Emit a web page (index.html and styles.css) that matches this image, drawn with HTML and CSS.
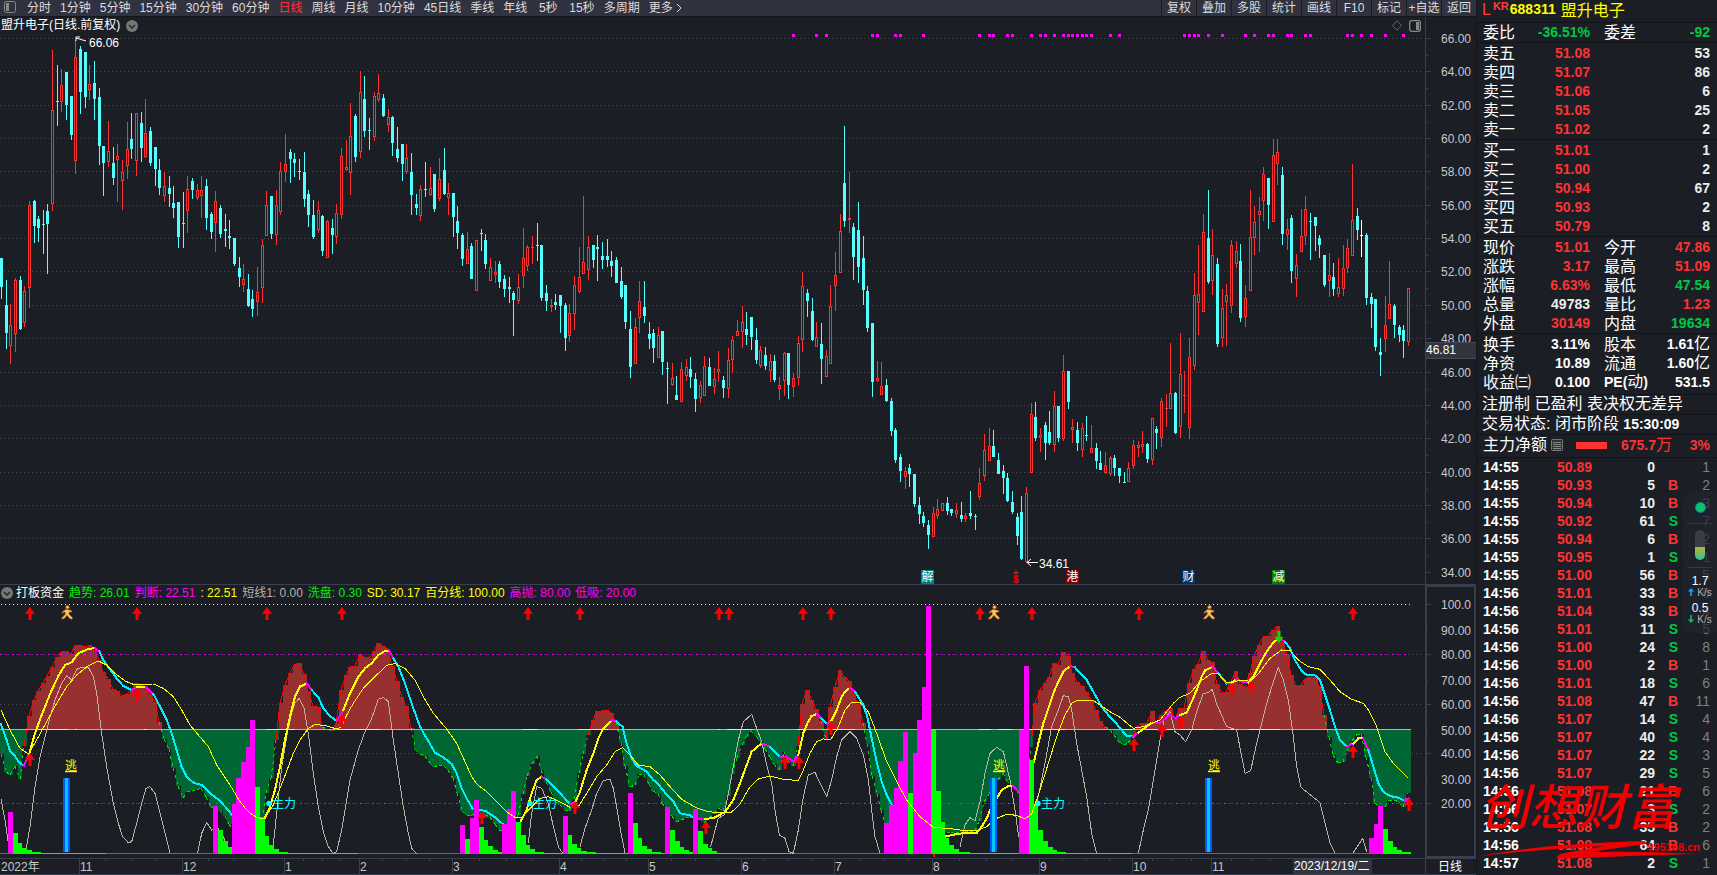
FILE: index.html
```html
<!DOCTYPE html>
<html lang="zh-CN">
<head>
    <meta charset="UTF-8">
    <meta name="viewport" content="width=device-width, initial-scale=1.0">
    <title>盟升电子 688311 日线</title>
    <link rel="stylesheet" href="styles.css">
</head>
<body>
    <main class="charts">
        <nav class="toolbar">
            <div class="periods">
                <svg class="panel-icon" width="12" height="12" viewBox="0 0 12 12"><rect x="0.5" y="0.5" width="11" height="11" rx="2" fill="none" stroke="#888"/><rect x="2" y="2" width="3" height="8" fill="#888"/></svg>
                <button>分时</button>
                <button>1分钟</button>
                <button>5分钟</button>
                <button>15分钟</button>
                <button>30分钟</button>
                <button>60分钟</button>
                <button class="active">日线</button>
                <button>周线</button>
                <button>月线</button>
                <button>10分钟</button>
                <button>45日线</button>
                <button>季线</button>
                <button>年线</button>
                <button>5秒</button>
                <button>15秒</button>
                <button>多周期</button>
                <button class="more">更多<svg width="6" height="10" viewBox="0 0 6 10"><path d="M1 1l4 4-4 4" fill="none" stroke="#ddd"/></svg></button>
            </div>
            <div class="tools">
                <button>复权</button>
                <button>叠加</button>
                <button>多股</button>
                <button>统计</button>
                <button>画线</button>
                <button>F10</button>
                <button>标记</button>
                <button>+自选</button>
                <button>返回</button>
            </div>
        </nav>

        <!-- K线 -->
        <header class="chart-title">
            <h1>盟升电子(日线.前复权)</h1>
            <svg width="12" height="12" viewBox="0 0 12 12"><circle cx="6" cy="6" r="6" fill="#777"/><path d="M3 5l3 3 3-3" fill="none" stroke="#222" stroke-width="1.4"/></svg>
            <div class="title-icons">
                <svg width="10" height="11" viewBox="0 0 10 11"><path d="M5 .7L9.4 5.5 5 10.3.6 5.5z" fill="none" stroke="#666"/></svg>
                <svg width="12" height="12" viewBox="0 0 12 12"><rect x="0.7" y="0.7" width="10.6" height="10.6" rx="2" fill="none" stroke="#888" stroke-width="1.3"/><rect x="7" y="2" width="3" height="8" fill="#888"/></svg>
            </div>
            <div class="axis-gap"></div>
        </header>
        <svg id="price" class="plot" viewBox="0 34 1476 550"></svg>

        <!-- 副图 -->
        <header class="indicator-title">
            <svg width="12" height="12" viewBox="0 0 12 12"><circle cx="6" cy="6" r="6" fill="#777"/><path d="M3 5l3 3 3-3" fill="none" stroke="#222" stroke-width="1.4"/></svg>
            <h2>打板资金</h2>
            <span class="lime">趋势: 26.01</span>
            <span class="magenta">判断: 22.51</span>
            <span class="yellow">: 22.51</span>
            <span class="sand">短线1: 0.00</span>
            <span class="lime">洗盘: 0.30</span>
            <span class="yellow">SD: 30.17</span>
            <span class="yellow">百分线: 100.00</span>
            <span class="magenta">高抛: 80.00</span>
            <span class="magenta">低吸: 20.00</span>
            <div class="axis-gap boxed"></div>
        </header>
        <svg id="indicator" class="plot" viewBox="0 601 1476 274"></svg>
    </main>

    <aside class="quote">
        <header class="stock"><span class="flag">L</span><sup>KR</sup><b>688311</b><span class="name">盟升电子</span></header>
        <div class="rows single">
            <div class="row"><span>委比</span><b class="down">-36.51%</b><span>委差</span><b class="down">-92</b></div>
        </div>
        <div id="asks" class="rows"></div>
        <div id="bids" class="rows"></div>
        <div id="stats" class="rows"></div>
        <div id="finance" class="rows finance"></div>
        <p class="note">注册制 已盈利 表决权无差异</p>
        <p class="note">交易状态: 闭市阶段 <b>15:30:09</b></p>
        <div class="netflow">
            <span>主力净额</span>
            <svg width="12" height="12" viewBox="0 0 12 12"><rect x="0.5" y="0.5" width="11" height="11" rx="1" fill="#333" stroke="#777"/><path d="M2 3.5h8M2 5.5h8M2 7.5h8M2 9.5h8" stroke="#888"/></svg>
            <i class="flow-bar"></i>
            <span class="amount"><b>675.7</b>万</span>
            <b class="ratio">3%</b>
        </div>
        <table class="ticks"><tbody id="ticks"></tbody></table>

        <div class="net-widget">
            <i class="dot"></i>
            <i class="pill"></i>
            <div class="speed">1.7<small><svg width="6" height="8" viewBox="0 0 6 8"><path d="M3 0L6 3.500H3.800V8H2.200V3.500H0z" fill="#1ea0ff"/></svg>K/s</small></div>
            <div class="speed">0.5<small><svg width="6" height="8" viewBox="0 0 6 8"><path d="M3 8L6 4.500H3.800V0H2.200V4.500H0z" fill="#10c060"/></svg>K/s</small></div>
        </div>
        <div class="watermark">
            <strong>创想财富</strong>
            <svg viewBox="0 0 220 20"><path d="M1 16Q60 4 165 1L166 4 110 12Q165 11 218 14 165 15 78 19 74 16 84 13L125 6Q60 9 1 16z" fill="#f00000"/></svg>
            <em>995168.cn</em>
        </div>
    </aside>
    <script src="chart.js"></script>
</body>
</html>
```
FILE: styles.css
```css
* {
    box-sizing: border-box;
}

body {
    margin: 0;
    display: flex;
    align-items: flex-start;
    min-height: 100vh;
    overflow: hidden;
    background: #1b1e25;
    color: #fff;
    font-family: "Liberation Sans", "Noto Sans CJK SC", sans-serif;
    font-size: 12px;
}

h1, h2, p {
    margin: 0;
    font-size: 12px;
    font-weight: normal;
}

button {
    padding: 0;
    border: 0;
    background: none;
    color: #dcdcdc;
    font: inherit;
    white-space: nowrap;
    cursor: pointer;
}

.charts {
    flex: 1;
    min-width: 0;
}

/* toolbar */
.toolbar {
    display: flex;
    justify-content: space-between;
    height: 17px;
    background: #31323f;
    border-bottom: 1px solid #14161b;
    line-height: 14px;
}

.periods {
    display: flex;
    gap: 9px;
    padding-left: 4px;
}

.periods button {
    min-width: 24px;
}

.periods .active {
    color: #ff3232;
}

.panel-icon {
    margin: 1px 2px 0 0;
}

.more svg {
    margin-left: 3px;
    vertical-align: -1px;
}

.tools {
    display: flex;
}

.tools button {
    width: 35px;
    border-left: 1px solid #191b22;
}

/* chart headers */
.chart-title, .indicator-title {
    display: flex;
    align-items: center;
    height: 17px;
    line-height: 17px;
}

.chart-title {
    padding-left: 1px;
    gap: 6px;
}

.title-icons {
    display: flex;
    gap: 7px;
    margin-left: auto;
}

.axis-gap {
    align-self: stretch;
    width: 51px;
    margin-left: auto;
    border-left: 1px solid #39404d;
}

.title-icons + .axis-gap {
    margin-left: -2px;
}

.boxed {
    border: 2px solid #39404d;
    border-bottom: 0;
}

.indicator-title {
    gap: 5px;
    padding-left: 1px;
    border-top: 1px solid #39404d;
}

.indicator-title h2 {
    margin-left: -2px;
}

.plot {
    display: block;
    width: 100%;
    overflow: visible;
    font-size: 12px;
}

.lime { color: #00f000; }
.magenta { color: #ff00ff; }
.yellow { color: #ffff00; }
.sand { color: #bdb3a5; }

/* quote panel */
.quote {
    position: relative;
    width: 241px;
    border-left: 1px solid #12141a;
    font-size: 16px;
}

.quote b {
    font-size: 14px;
}

.stock {
    display: flex;
    align-items: center;
    height: 23px;
    padding: 0 0 5px 5px;
    border-bottom: 1px solid #12141a;
    color: #ffff00;
}

.stock .flag {
    color: #ff4040;
    line-height: 16px;
    padding-top: 2px;
}

.stock sup {
    color: #ff4040;
    font-size: 11px;
    font-weight: bold;
    line-height: 11px;
    padding: 0 1px 5px 2px;
}

.stock .name {
    margin-left: 5px;
}

.rows {
    padding: 1px 7px 0 6px;
    border-bottom: 1px solid #12141a;
}

.rows.single {
    padding-top: 0;
}

.row {
    display: grid;
    grid-template-columns: 54px 53px 54px 1fr;
    align-items: center;
    height: 19px;
    line-height: 19px;
    white-space: nowrap;
}

.row b {
    text-align: right;
}

.row span:nth-child(3) {
    padding-left: 14px;
}

.finance {
    padding: 0 7px 3px 6px;
}

.up { color: #ff3232; }
.down { color: #00c840; }
.plain { color: #ececec; }

.unit {
    font-weight: normal;
    font-size: 16px;
}

.note {
    height: 20px;
    padding-left: 5px;
    border-bottom: 1px solid #12141a;
    font-size: 16px;
    line-height: 18px;
    white-space: nowrap;
}

.netflow {
    display: flex;
    align-items: center;
    height: 23px;
    padding: 0 7px 2px 6px;
    border-bottom: 1px solid #12141a;
    line-height: 20px;
    white-space: nowrap;
}

.netflow > svg {
    margin-left: 4px;
}

.flow-bar {
    width: 31px;
    height: 7px;
    margin: 0 14px 0 13px;
    background: #ff3232;
}

.amount, .ratio {
    color: #ff3232;
}

.ratio {
    margin-left: auto;
}

.ticks {
    width: 233px;
    border-collapse: collapse;
    font-size: 14px;
    font-weight: bold;
}

.ticks td {
    height: 18px;
    padding: 0;
    line-height: 18px;
    text-align: right;
}

.ticks td:first-child {
    width: 50px;
    padding-left: 6px;
    text-align: left;
}

.ticks td:nth-child(2) { width: 65px; }
.ticks td:nth-child(3) { width: 63px; }
.ticks td:nth-child(4) { width: 23px; }

.ticks td:last-child {
    color: #808080;
    font-weight: normal;
}

/* floating network meter */
.net-widget {
    position: absolute;
    top: 491px;
    right: 0;
    width: 34px;
    height: 142px;
    padding-top: 11px;
    border-radius: 10px 0 0 10px;
    background: rgba(31, 35, 46, 0.7);
    text-align: center;
}

.dot {
    display: block;
    width: 11px;
    height: 11px;
    margin: 0 auto 17px;
    border-radius: 50%;
    background: #0cc267;
    border: 1px solid #1a7ca0;
}

.pill {
    display: block;
    width: 10px;
    height: 30px;
    margin: 0 auto;
    border-radius: 5px;
    background: linear-gradient(#3a3d47 17px, #b5b52c 17px, #30c0a0);
}

.pill::before, .pill::after {
    content: "";
    position: absolute;
    left: 4px;
    right: 4px;
    top: 32px;
    height: 1px;
    background: #343b48;
}

.pill::after {
    top: 76px;
}

.speed {
    margin-top: 15px;
    font-size: 12px;
    line-height: 12px;
}

.speed + .speed {
    margin-top: 4px;
}

.speed small {
    display: block;
    color: #b0b0b0;
    font-size: 10px;
    line-height: 11px;
}

.speed small svg {
    margin-right: 3px;
}

.watermark {
    position: absolute;
    top: 778px;
    left: 3px;
    width: 225px;
    color: #f00000;
}

.watermark strong {
    display: block;
    height: 62px;
    font-size: 49px;
    font-style: italic;
    font-weight: 500;
    line-height: 60px;
}

.watermark svg {
    display: block;
    width: 220px;
}

.watermark em {
    position: absolute;
    top: 63px;
    right: 5px;
    font-size: 11px;
    font-style: normal;
    font-weight: bold;
}
```
FILE: chart.js
```js
const STEP = 4.659;
const LEFT = 1.4;
const cx = i => Math.round(LEFT + i * STEP - 0.5);

function line(x1, y1, x2, y2, color, extra = '') {
    return `<path d="M${x1} ${y1}L${x2} ${y2}" stroke="${color}" fill="none" ${extra}/>`;
}
function rect(x, y, w, h, color) {
    return `<rect x="${x}" y="${y}" width="${w}" height="${h}" fill="${color}"/>`;
}
function text(x, y, s, color, extra = '') {
    return `<text x="${x}" y="${y}" fill="${color}" ${extra}>${s}</text>`;
}

// r/c + high,top,bottom,low
const candles = `
c258,258,287,299 c280,305,333,349 r304,325,346,364 r278,280,334,352 c276,280,329,330 r286,291,323,327 r201,205,288,308 c200,201,226,243 c216,219,228,242 c210,224,225,254
c204,211,224,274 r50,110,204,211 c65,101,102,126 r69,85,102,112 c72,72,105,120 c96,96,135,140 r40,57,161,174 c46,49,92,114 c52,52,97,108 r65,84,90,100
c61,83,99,120 c88,97,146,165 c146,146,163,196 r121,151,162,167 c147,163,178,185 r144,156,160,202 r160,172,181,210 r122,149,166,179 c113,139,149,159 r113,113,161,176
c112,123,148,162 r99,133,157,158 c127,131,163,166 c147,147,169,186 c159,170,188,195 r172,186,196,202 c176,188,194,207 c186,203,208,218 c202,202,237,248 c192,223,224,248
r176,189,211,233 c178,181,190,199 r184,190,198,200 r176,190,196,218 c179,186,218,230 c212,214,232,239 r191,201,223,252 c205,208,234,238 c214,229,231,247 c220,236,238,249
c238,238,264,266 c257,268,277,287 r264,279,285,292 c274,289,306,307 c290,299,309,317 r267,292,302,316 r239,245,288,303 r191,205,236,236 c196,196,234,239 r190,205,235,245
r162,171,212,215 r134,164,172,182 c149,152,159,183 c153,159,163,177 c159,171,172,180 c152,172,199,207 c190,194,215,227 c200,215,237,239 r201,210,230,233 c215,216,251,256
r220,221,258,258 c219,228,235,254 r204,213,237,244 r148,156,215,219 r140,167,170,171 r103,136,173,195 c114,116,157,162 r71,92,152,158 c76,99,131,137 c118,130,131,150
r92,96,137,141 r74,93,100,102 c94,98,116,117 r109,117,125,132 c116,117,143,156 c127,149,158,162 c144,144,164,181 r144,158,172,174 c153,172,195,215 c194,204,208,215
r185,189,216,221 c162,189,190,197 r167,188,195,196 c174,174,209,212 r158,179,199,201 c148,170,194,195 r183,193,198,215 c193,193,217,237 c206,221,233,249 c233,235,259,266
r232,249,264,264 c243,246,279,279 r240,240,291,291 c229,233,234,251 c234,240,264,269 r258,267,281,281 r261,272,275,283 c261,264,282,288 c275,279,289,297 c277,287,289,303
c291,293,300,336 r274,287,301,304 r228,258,276,288 r245,247,266,271 r236,247,248,264 c223,245,246,261 c245,245,298,301 c285,293,301,311 r299,305,307,312 c294,302,305,310
c295,295,306,333 c303,305,338,351 r304,313,336,342 r276,285,314,330 r247,277,292,293 r196,262,274,274 r236,247,270,280 c245,245,260,268 c235,247,249,281 c242,256,260,269
c239,256,260,267 c251,261,266,277 c257,260,283,283 c267,281,297,299 c285,285,322,329 c311,329,367,378 r318,327,364,364 r281,301,318,333 c281,307,316,323 c322,334,339,349
c329,333,348,363 r327,335,358,358 c331,331,362,375 c362,368,369,404 r363,378,385,386 c376,395,400,400 r362,369,402,402 r359,367,376,381 c357,369,377,388 c373,379,399,412
r381,385,398,403 r356,366,396,396 c358,367,386,386 r368,379,387,394 r351,369,372,382 c376,380,388,398 r348,360,389,398 r336,340,360,373 r320,331,336,336 r306,322,332,348
c312,329,335,345 c317,317,337,350 c328,340,360,364 r346,350,366,368 c347,355,366,370 r354,361,371,382 c355,361,380,382 r377,385,389,400 r352,353,381,396 c353,353,385,399
r373,378,387,397 r336,343,378,385 r272,286,340,352 c289,293,301,317 c298,311,340,341 r322,337,347,347 c323,344,359,384 r350,356,377,377 r285,306,364,364 r252,275,286,311
r214,231,273,273 c126,183,221,227 r172,218,220,233 c223,227,257,280 c202,230,267,283 c236,258,290,305 c286,291,328,332 c323,323,382,397 r361,378,381,382 r362,386,395,395
c379,385,401,402 c398,401,431,436 c428,430,460,463 c454,457,471,482 r467,471,477,489 c464,468,474,487 c474,474,504,507 c497,505,514,524 c512,516,523,527 c520,525,535,549
r507,513,537,537 r499,509,516,519 r503,503,511,511 c497,503,511,515 c509,509,513,516 r503,510,514,518 c502,515,519,522 r513,516,519,522 c491,513,516,519 c514,516,517,530
r468,483,497,500 r434,450,476,481 r428,446,461,461 c430,446,457,457 c453,460,474,474 c465,471,478,494 c473,478,501,502 c491,502,512,514 c513,517,536,545 c496,512,559,560
r487,493,562,563 r403,414,473,473 c402,417,438,441 r428,435,438,452 c422,425,443,460 c411,432,443,445 r391,406,445,452 c406,406,438,442 r355,371,439,441 c371,371,402,409
r419,427,430,443 c422,430,443,451 r423,428,450,457 c416,435,436,441 r425,448,453,453 c443,448,461,469 c451,463,470,470 r452,465,473,474 r456,458,474,476 c455,458,468,476
c468,468,476,483 c472,482,483,483 r462,468,482,482 r440,445,466,469 r441,445,448,457 r431,444,447,453 c443,444,459,463 r418,418,460,465 c426,429,433,449 r398,401,438,447
r394,408,409,427 r343,393,409,409 c392,393,433,434 r333,374,427,438 r371,395,396,413 r338,357,428,439 r273,295,366,370 r245,294,303,335 r214,232,312,312 c190,238,282,284
r229,255,281,295 c258,264,344,347 r289,308,338,347 r284,295,302,346 r240,245,306,313 r241,251,264,268 c244,261,318,322 r285,298,317,327 r190,237,291,291 r206,222,238,255
r197,211,215,252 r167,174,201,221 c178,178,205,229 r139,155,222,222 r139,152,164,185 c167,175,234,245 r219,229,235,250 c215,218,271,283 r254,265,279,297 r209,236,252,252
r196,209,236,245 c213,221,222,260 c217,217,226,251 c235,238,245,258 c255,255,285,287 r253,275,281,297 c263,277,289,296 r258,287,294,297 r245,268,289,296 r239,248,268,273
r164,220,256,256 c208,216,230,240 w220,235,236,257 c233,235,298,305 c293,297,304,328 c299,299,347,351 c338,352,355,376 r296,325,339,352 r261,304,319,319 c304,306,325,338
c325,327,335,342 c325,330,341,358 r288,288,342,346`.trim().split(/\s+/);

const priceLines = [38, 71, 105, 138, 171, 205, 238, 271, 305, 338, 372, 405, 438, 472, 505, 538, 572];
const signals = [170, 175, 177, 187, 188, 192, 193, 198, 210, 212, 213, 216, 217, 221, 223, 224, 226, 228, 229, 230, 231, 232, 233, 234, 238, 240, 254, 255, 256, 257, 259, 262, 267, 269, 272, 273, 276, 277, 280, 281, 289, 290, 292, 294, 297, 301];
const badges = [['解', 921, '#008080'], ['港', 1066, '#800000'], ['财', 1182, '#003366'], ['减', 1272, '#008000']];

function drawPrice() {
    let s = '<g shape-rendering="crispEdges">';
    priceLines.forEach((y, k) => {
        if (k < 16) s += line(0, y + 0.5, 1422, y + 0.5, '#444852', 'stroke-dasharray="1 3"');
        s += line(1425, y + 0.5, 1431, y + 0.5, '#39404d');
        if (k < 16) s += line(1425, y + 17.5, 1428, y + 17.5, '#39404d');
    });
    s += line(1425.5, 34, 1425.5, 584, '#39404d');
    signals.forEach(i => s += rect(cx(i) - 1, 34, 3, 3, '#ff00ff'));

    candles.forEach((c, i) => {
        const color = { r: '#ff3232', c: '#54ffff', w: '#ffffff' }[c[0]];
        const [high, top, bottom, low] = c.slice(1).split(',').map(Number);
        const x = cx(i);
        s += rect(x, high, 1, low - high, color);
        s += rect(x - 1, top, 3, Math.max(1, bottom - top), color);
        if (c[0] === 'r' && bottom - top > 2) s += rect(x, top + 1, 1, bottom - top - 2, '#1b1e25');
    });
    s += '</g>';

    priceLines.forEach((y, k) => s += text(1471, y + 5, (66 - k * 2).toFixed(2), '#c8c8c8', 'text-anchor="end"'));
    s += rect(1426, 342, 50, 17, '#32353f') + line(1426, 342.5, 1476, 342.5, '#454b58') + line(1426, 358.5, 1476, 358.5, '#454b58');
    s += text(1426, 354, '46.81', '#fff');
    s += '<path d="M86 41L76 38M80 37H76V41" stroke="#fff" fill="none"/>' + text(89, 47, '66.06', '#fff');
    s += '<path d="M1038 562.500H1027M1031 559L1027 562.500 1031 566" stroke="#fff" fill="none"/>' + text(1039, 568, '34.61', '#fff');
    badges.forEach(b => s += rect(b[1], 570, 13, 14, b[2]) + text(b[1] + 0.5, 581, b[0], '#fff'));
    s += '<path d="M1016 570l3 4h-6z" fill="#f00"/>' + text(1013, 583, '$', '#f00', 'font-weight="bold" font-size="10"');
    document.getElementById('price').innerHTML = s;
}

// trend outline, "x y"
const trend = `0 741 3 768 10 777 15 765 20 779 27 730 31 706 37 694 43 683 50 673 55 661 60 652 68 651 71 655 74 645 82 645 85 647 89 644 93 648 97 654 102 667 106 677 110 680 113 689 118 691 123 697 128 694 133 690 137 682 142 685 148 690 152 697 157 705 160 723 163 737 168 745 172 760 175 773 179 788 183 798 186 793 193 791 202 788 205 793 210 807 217 810 223 812 230 825 240 840 256 840 262 822 267 793 272 777 275 757 278 717 283 693 288 678 293 667 299 662 303 670 307 683 310 695 313 706 320 708 322 727 328 729 333 731 337 723 340 695 344 683 348 668 357 666 360 654 367 659 372 656 378 642 385 647 390 650 393 667 398 683 402 697 407 706 411 725 414 747 418 752 427 757 433 768 438 765 447 767 453 777 458 793 462 810 470 817 477 812 487 815 492 818 497 827 502 832 512 825 520 813 525 783 530 770 533 763 537 755 539 762 542 770 547 783 555 800 562 807 567 812 572 810 575 797 578 777 583 757 587 740 591 727 595 713 598 711 607 710 612 713 617 723 620 738 625 762 629 787 635 785 640 773 645 775 652 790 658 793 663 803 670 813 674 818 678 824 683 818 692 817 700 818 703 825 710 818 715 813 719 808 725 812 728 797 733 773 737 760 740 748 745 740 752 730 757 737 763 743 767 753 772 760 777 768 780 771 783 752 787 753 790 765 795 767 798 747 801 707 804 702 807 689 811 698 814 703 818 712 822 723 826 740 829 717 833 693 837 682 840 670 845 677 850 682 853 692 857 698 860 708 863 722 867 733 870 767 873 777 877 793 882 810 885 822 890 835 940 832 960 832 977 831 982 813 985 800 990 793 995 783 1000 778 1003 773 1007 780 1013 787 1019 793 1025 800 1029 767 1033 727 1034 708 1039 692 1045 683 1050 677 1053 663 1060 665 1063 652 1068 655 1073 673 1078 683 1085 688 1090 697 1095 707 1100 720 1105 727 1113 732 1118 740 1123 746 1130 743 1133 737 1136 728 1142 723 1149 723 1152 711 1157 723 1161 715 1168 710 1173 707 1176 722 1180 708 1185 708 1188 688 1193 670 1198 665 1201 660 1203 650 1207 660 1213 662 1217 683 1222 693 1227 692 1231 682 1236 671 1239 682 1245 688 1249 677 1253 660 1258 648 1263 637 1268 637 1273 630 1279 625 1282 640 1287 653 1292 675 1297 686 1302 685 1307 677 1317 677 1321 690 1323 708 1327 727 1330 740 1333 753 1337 763 1345 762 1348 750 1353 740 1358 733 1363 734 1367 760 1371 777 1375 802 1383 810 1390 800 1397 800 1405 808 1409 790`.split(' ').map(Number);

// The curves below are stored at three units per pixel, in blocks that start at an x offset.
const BLOCKS = [0, 1410, 2880];
const px = (b, x) => +((BLOCKS[b] + x) / 3).toFixed(2);
const py = y => +(580 + y / 3).toFixed(2);

const judge = [
    [0, '3,433 20,480 30,513 45,528 58,548 72,557 88,520 105,460 125,405 150,342 175,288 195,255 215,247 235,220 265,207 285,204 298,215 310,240 330,268 350,295 370,318 395,330 410,320 438,320 460,342 480,380 500,420 515,460 530,510 545,560 560,590 580,608 605,615 630,640 655,658 680,685 697,706'],
    [0, '793,718 810,680 825,630 840,560 855,480 870,410 885,350 900,320 920,310 935,330 955,352 970,385 990,408 1010,423 1030,390 1050,340 1075,290 1095,265 1115,250 1135,225 1155,213 1168,212 1180,235 1195,260 1215,310 1240,385 1260,440 1280,475 1305,518 1330,532 1355,552 1370,580 1385,625 1400,655 1418,686'],
    [1, '25,690 45,692 75,712 98,732'],
    [1, '152,723 170,690 185,640 200,600 215,590 230,598 250,620 275,645 300,672 315,668 330,635 350,570 370,520 385,475 400,445 425,420 440,425 457,440 470,490 485,535 500,558 530,575 550,600 565,612 590,645 610,665 630,700 660,706 680,718 705,718 735,712 765,696 790,660 810,610 830,555 845,515 875,490 900,500 930,530 950,530 970,545 985,525 1000,460 1012,430 1025,408 1040,402 1055,415 1070,432 1085,420 1100,390 1115,350 1125,335 1140,323 1155,335 1180,375 1192,410 1205,475 1220,545 1235,605 1250,645 1265,673'],
    [1, '1425,770 1445,765 1475,760 1520,758'],
    [2, '50,758 65,740 80,715 95,680 110,655 125,630 145,618 160,618 178,640'],
    [2, '222,545 235,490 250,430 265,385 280,340 295,305 310,275 330,258 345,262 360,280 380,300 400,335 425,380 445,405 465,425 480,445 500,467 518,470 535,458 560,440 575,428 600,430 630,402 645,415 660,405 680,398 695,365 710,330 725,290 735,272 758,260 775,280 800,310 815,308 830,297 850,307 865,307 880,290 900,250 920,215 940,187 957,175 975,185 990,205 1005,240 1020,265 1035,283 1068,287 1080,300 1095,345 1110,390 1125,440 1140,480 1160,500 1180,490 1195,475 1210,475 1225,510 1240,560 1255,610 1270,635 1290,648 1315,653 1335,663 1345,655']
];
const sd = [
    [0, '3,390 30,450 60,505 85,522 110,480 140,425 170,370 200,320 230,285 265,257 295,243 320,255 345,280 375,303 400,313 460,312 490,325 520,350 545,390 570,435 595,465 625,500 650,555 690,615 720,665 745,695 770,713 793,716 820,675 850,600 880,520 900,480 925,445 945,434 975,436 1010,447 1025,440 1040,405 1060,370 1090,325 1130,285 1160,256 1185,251 1215,265 1245,300 1270,350 1300,400 1340,447 1370,490 1395,545 1415,590'],
    [1, '5,590 20,612 50,635 80,665 110,695 135,712 155,712 180,685 210,655 235,650 265,663 300,682 325,680 350,640 380,590 410,555 435,515 458,503 480,525 505,555 540,560 570,585 600,620 635,658 680,684 710,694 740,698 785,696 810,672 840,620 865,597 900,588 935,597 985,602 1000,570 1020,520 1040,485 1060,477 1083,478 1105,440 1125,390 1145,367 1170,368 1195,395 1220,460 1250,545 1280,605 1310,660 1350,710 1390,742 1440,746 1470,749'],
    [2, '0,750 55,750 80,740 105,717 140,703 170,706 195,717 215,702 235,645 265,550 290,470 315,405 335,370 350,362 400,362 420,375 450,395 480,412 520,445 550,440 600,420 640,370 660,352 690,340 720,305 755,280 775,282 800,308 850,300 872,305 900,275 930,235 965,210 990,212 1015,240 1045,260 1080,268 1110,300 1140,335 1175,358 1210,370 1225,390 1250,440 1275,515 1300,550 1325,575 1343,593']
];
const shortLine = [
    [0, '3,657 15,720 25,790'],
    [0, '78,810 90,740 105,620 120,530 145,430 165,360 185,310 200,287 215,300 230,268 245,262 265,262 280,290 290,340 305,460 320,560 340,670 355,730 368,770 385,788 395,785 410,730 425,670 438,625 450,620 465,640 480,700 495,760 510,820'],
    [0, '593,818 605,760 620,728 635,750 650,740 668,765 685,810'],
    [0, '817,820 830,700 845,560 860,470 875,400 885,370 897,355 912,385 925,460 940,580 955,680 970,755 985,800 1000,821 1010,815 1025,750 1050,600 1075,510 1095,455 1115,415 1135,358 1150,352 1165,365 1180,480 1195,580 1210,680 1225,760 1235,805 1250,821'],
    [1, '175,790 185,700 200,620 215,625 235,670 250,740 265,800 278,820'],
    [1, '330,800 345,745 365,690 380,640 400,602 420,597 430,625 445,710 455,770 465,820'],
    [1, '722,800 735,750 745,715 762,705 775,640 790,560 805,480 820,425 845,403 860,445 875,485 890,555 905,610 915,690 928,765 945,775 957,815 970,820 985,750 1000,650 1015,585 1035,577 1050,610 1070,650 1085,600 1100,530 1115,480 1140,455 1160,475 1180,525 1195,600 1205,690 1215,770 1230,820'],
    [2, '0,800 15,735 30,713 45,722 60,665 75,580 90,520 110,502 130,515 150,600 165,690 176,770'],
    [2, '222,700 237,640 255,550 275,440 295,390 310,347 325,350 335,390 350,490 365,570 380,650 395,760 410,820'],
    [2, '535,820 550,750 565,690 580,600 600,480 612,420 630,395 645,455 660,465 677,485 695,450 710,395 730,340 745,338 757,328 770,372 800,440 830,450 845,530 855,580 872,572 890,490 915,390 935,320 955,263 970,300 985,360 1000,470 1010,560 1023,622 1080,668 1095,730 1110,790 1125,820'],
    [2, '1180,818 1208,775 1220,815']
];
// block, colour, then x,top pairs; the last x closes the run
const volumes = [
    [0, 'm24,696 g39,759 g54,790 g66,803 g80,810 g96,816 124'],
    [0, 'm639,678 g654,750 g669,783 g684,801 m696,672 m708,594 m723,546 m738,501 m750,420 g765,621 g780,710 g795,767 g808,795 g822,807 g837,815 864'],
    [0, 'm1380,735 g1395,778 m1410,714 m1422,660 g1437,740 g1452,780 g1464,798 g1479,810 g1493,815 m1506,732 m1520,687 m1534,633 g1548,726 g1563,765 g1578,795 g1590,807 g1605,815 1632'],
    [1, 'm279,708 g294,765 g306,792 g320,804 g334,812 g350,817 378'],
    [1, 'm474,639 g489,729 g504,774 g516,797 g530,808 g545,816 573'],
    [1, 'm585,681 g600,750 g615,783 g630,801 g642,810 g657,817 m669,687 g684,753 g699,792 g714,805 g726,814 g740,818 768'],
    [1, 'm1242,729 m1257,675 m1272,624 m1284,543 m1299,456 g1314,639 m1329,519 m1341,420 m1356,321 m1368,78 g1383,450 g1398,633 g1413,726 g1425,775 g1437,795 g1452,808 g1467,815 1500'],
    [2, 'm177,450 m192,258 g207,540 g222,672 g234,750 g249,783 g264,801 g278,811 g292,817 318'],
    [2, 'm1227,774 m1242,732 m1254,678 g1269,747 g1284,783 g1299,801 g1311,811 g1326,817 1353']
];

const points = (b, str) => str.split(' ').map(p => { const [x, y] = p.split(',').map(Number); return [px(b, x), py(y)]; });

function trendAt(x) {
    for (let k = 0; k < trend.length - 2; k += 2) {
        if (x <= trend[k + 2]) {
            const t = (x - trend[k]) / (trend[k + 2] - trend[k]);
            return trend[k + 1] + t * (trend[k + 3] - trend[k + 1]);
        }
    }
    return trend[trend.length - 1];
}

const upArrow = (x, y) => `<path d="M${x} ${y}l5 7h-3.500v6h-3v-6h-3.500z" fill="#ff0000"/>`;

function runner(x) {
    return `<g transform="translate(${x} 606)" fill="#ffc060" stroke="#7a3c10" stroke-width="0.8"><path d="M-1 3L5 4.500 5 6 2 6.500 2 8 6 12 5 13.200 3 13 0 9.500 -3 13 -6 13 -5 11.500 -2 8.500 -2 6 -5 7.500 -5 6z"/><circle cy="1.200" cx="0.500" r="1.900"/></g>`;
}

function drawIndicator() {
    let s = '<g shape-rendering="crispEdges">';
    s += line(0, 704.5, 1422, 704.5, '#444852', 'stroke-dasharray="1 3"') + line(0, 753.5, 1422, 753.5, '#444852', 'stroke-dasharray="1 3"');

    // filled area around the 50 line
    let outline = '';
    for (let i = 0; i <= 302; i++) {
        const x = LEFT + i * STEP;
        const y = Math.round(trendAt(x));
        const x0 = Math.round(x - STEP / 2);
        const x1 = Math.round(x + STEP / 2);
        const bottom = Math.min(y, 852);
        s += y < 729 ? rect(x0, y, x1 - x0, 729 - y, '#983030') : rect(x0, 729, x1 - x0, bottom - 729, '#006633');
        if (i) {
            const prev = Math.round(trendAt(x - STEP));
            outline += line(cx(i - 1), prev, cx(i), y, y < 729 ? '#ff0000' : '#00e000', y < 729 ? '' : 'stroke-dasharray="3 4"');
        }
    }
    s += outline;
    s += line(0, 654.5, 1422, 654.5, '#444852', 'stroke-dasharray="1 3"');
    s += line(0, 654.5, 1410, 654.5, '#ff00ff', 'stroke-dasharray="2 4 1 5"');
    s += line(0, 803.5, 1422, 803.5, '#444852', 'stroke-dasharray="1 3"');
    s += line(0, 803.5, 1410, 803.5, '#ff00ff', 'stroke-dasharray="2 4 1 5"');
    s += line(1, 604.5, 1410, 604.5, '#ffff00', 'stroke-dasharray="1 3"');

    s += line(0, 729.5, 1411, 729.5, '#00ffff');
    [[38, 68], [75, 77], [144, 147], [266, 295], [338, 380], [522, 538], [578, 608], [718, 720], [727, 752], [797, 806], [831, 855], [979, 991], [998, 1012], [1028, 1065], [1120, 1133], [1145, 1157], [1167, 1173], [1180, 1213], [1230, 1238], [1249, 1280], [1352, 1364]]
        .forEach(r => s += line(r[0], 729.5, r[1], 729.5, '#ffff00'));
    s += line(0, 853.5, 1411, 853.5, '#00ff00');
    [[0, 40], [106, 288], [358, 460], [791, 884], [1132, 1370]].forEach(r => s += line(r[0], 853.5, r[1], 853.5, '#ff00ff'));

    shortLine.forEach(c => s += `<polyline points="${points(c[0], c[1]).join(' ')}" fill="none" stroke="#bdb3a5"/>`);

    judge.forEach(c => {
        const p = points(c[0], c[1]);
        for (let k = 1; k < p.length; k++) {
            const rising = p[k][1] <= p[k - 1][1];
            const turned = k > 1 && rising !== (p[k - 1][1] <= p[k - 2][1]);
            s += line(p[k - 1].join(' '), '', p[k].join(' '), '', turned ? '#ff00ff' : rising ? '#ffff00' : '#00f0ff', 'stroke-width="2" stroke-linecap="square"');
        }
    });

    volumes.forEach(v => {
        const run = v[1].split(' ');
        for (let k = 0; k < run.length - 1; k++) {
            const [x, top] = run[k].slice(1).split(',').map(Number);
            const next = parseInt(run[k + 1].replace(/^[mg]/, ''), 10);
            s += rect(px(v[0], x), py(top), (next - x) / 3, 854 - py(top), run[k][0] === 'm' ? '#ff00ff' : '#00ff00');
        }
    });
    sd.forEach(c => s += `<polyline points="${points(c[0], c[1]).join(' ')}" fill="none" stroke="#ffff00"/>`);
    [63, 990, 1205].forEach(x => s += rect(x, 778, 7, 74, '#0058ff') + rect(x + 2, 778, 3, 74, '#00c8ff'));
    s += '</g>';

    // 信号
    [30, 137, 267, 342, 528, 580, 719, 729, 803, 831, 980, 1032, 1139, 1353].forEach(x => s += upArrow(x, 607));
    [[30, 753], [137, 688], [342, 714], [482, 811], [575, 801], [706, 821], [785, 756], [799, 756], [831, 722], [1134, 738], [1162, 724], [1181, 716], [1232, 683], [1251, 681], [1353, 745], [1409, 798]]
        .forEach(a => s += upArrow(a[0], a[1]));
    s += '<path d="M1279 643l-4.500-6h3v-6h3v6h3z" fill="#00e000"/>';
    [67, 994, 1209].forEach(x => s += runner(x));
    [65, 993, 1208].forEach(x => s += text(x, 770, '逃', '#ffff00', 'text-decoration="underline"'));
    [269, 530, 1038].forEach(x => s += `<circle cx="${x}" cy="803.500" r="2.700" fill="#00ffff"/>` + text(x + 3, 808, '主力', '#00ffff'));

    // 坐标
    const axis = '#39404d';
    s += '<g shape-rendering="crispEdges">';
    s += line(0, 858.5, 1476, 858.5, axis) + line(0, 874.5, 1476, 874.5, axis);
    s += `<path d="M1426 601V857H1475V601" fill="none" stroke="${axis}" stroke-width="2"/>`;
    s += line(1425.5, 858, 1425.5, 875, axis);
    const levels = [[604, '100.0'], [630, '90.00'], [654, '80.00'], [680, '70.00'], [704, '60.00'], [730, '50.00'], [753, '40.00'], [779, '30.00'], [803, '20.00']];
    levels.forEach((l, k) => s += line(1426, l[0] + 0.5, k % 2 ? 1428 : 1431, l[0] + 0.5, axis));
    const months = [[79, '11'], [182, '12'], [284, '1'], [359, '2'], [452, '3'], [559, '4'], [648, '5'], [741, '6'], [834, '7'], [932, '8'], [1039, '9'], [1132, '10'], [1211, '11']];
    months.forEach((m, k) => {
        s += line(m[0] + 0.5, 859, m[0] + 0.5, 874, axis);
        const next = k < 12 ? months[k + 1][0] : 1290;
        for (let q = 1; q < 4; q++) {
            const x = Math.round(m[0] + (next - m[0]) * q / 4) + 0.5;
            s += line(x, 859, x, 861, axis);
        }
    });
    s += rect(1293, 859, 79, 15, '#32353f') + rect(933, 854, 2, 3, '#ff0000') + '</g>';
    levels.forEach(l => s += text(1471, l[0] + 5, l[1], '#c8c8c8', 'text-anchor="end"'));
    months.forEach(m => s += text(m[0] + 1, 871, m[1], '#c8c8c8'));
    s += text(1, 871, '2022年', '#c8c8c8') + text(1294, 870, '2023/12/19/二', '#fff') + text(1438, 871, '日线', '#fff');
    document.getElementById('indicator').innerHTML = s;
}

function fillRows(id, rows) {
    document.getElementById(id).innerHTML = rows.map(r => {
        const [a, v, ac, b, w, bc] = r;
        return `<div class="row"><span>${a}</span><b class="${ac}">${v}</b><span>${b}</span><b class="${bc}">${w}</b></div>`;
    }).join('');
}

fillRows('asks', [['卖五', '51.08', 53], ['卖四', '51.07', 86], ['卖三', '51.06', 6], ['卖二', '51.05', 25], ['卖一', '51.02', 2]].map(r => [r[0], r[1], 'up', '', r[2], 'plain']));
fillRows('bids', [['买一', '51.01', 1], ['买二', '51.00', 2], ['买三', '50.94', 67], ['买四', '50.93', 2], ['买五', '50.79', 8]].map(r => [r[0], r[1], 'up', '', r[2], 'plain']));
fillRows('stats', [
    ['现价', '51.01', 'up', '今开', '47.86', 'up'],
    ['涨跌', '3.17', 'up', '最高', '51.09', 'up'],
    ['涨幅', '6.63%', 'up', '最低', '47.54', 'down'],
    ['总量', '49783', 'plain', '量比', '1.23', 'up'],
    ['外盘', '30149', 'up', '内盘', '19634', 'down']
]);
fillRows('finance', [
    ['换手', '3.11%', '', '股本', '1.61<span class="unit">亿</span>', ''],
    ['净资', '10.89', '', '流通', '1.60<span class="unit">亿</span>', ''],
    ['收益㈢', '0.100', '', '<b>PE(</b>动<b>)</b>', '531.5', '']
]);

const ticks = `14:55 50.89 0 - 1|14:55 50.93 5 B 2|14:55 50.94 10 B 3|14:55 50.92 61 S 7|14:55 50.94 6 B 2|14:55 50.95 1 S 1|14:55 51.00 56 B 5|14:56 51.01 33 B 6|14:56 51.04 33 B 4|14:56 51.01 11 S 5|14:56 51.00 24 S 8|14:56 51.00 2 B 1|14:56 51.01 18 S 6|14:56 51.08 47 B 11|14:56 51.07 14 S 4|14:56 51.07 40 S 4|14:56 51.07 22 S 3|14:56 51.07 29 S 5|14:56 51.08 21 B 6|14:56 51.07 3 S 2|14:56 51.08 35 B 2|14:56 51.08 64 B 6|14:57 51.08 2 S 1`;
document.getElementById('ticks').innerHTML = ticks.split('|').map(t => {
    const [time, price, vol, side, count] = t.split(' ');
    const cls = side === 'B' ? 'up' : 'down';
    return `<tr><td>${time}</td><td class="up">${price}</td><td class="plain">${vol}</td><td class="${cls}">${side === '-' ? '' : side}</td><td>${count}</td></tr>`;
}).join('');

drawPrice();
drawIndicator();
```
